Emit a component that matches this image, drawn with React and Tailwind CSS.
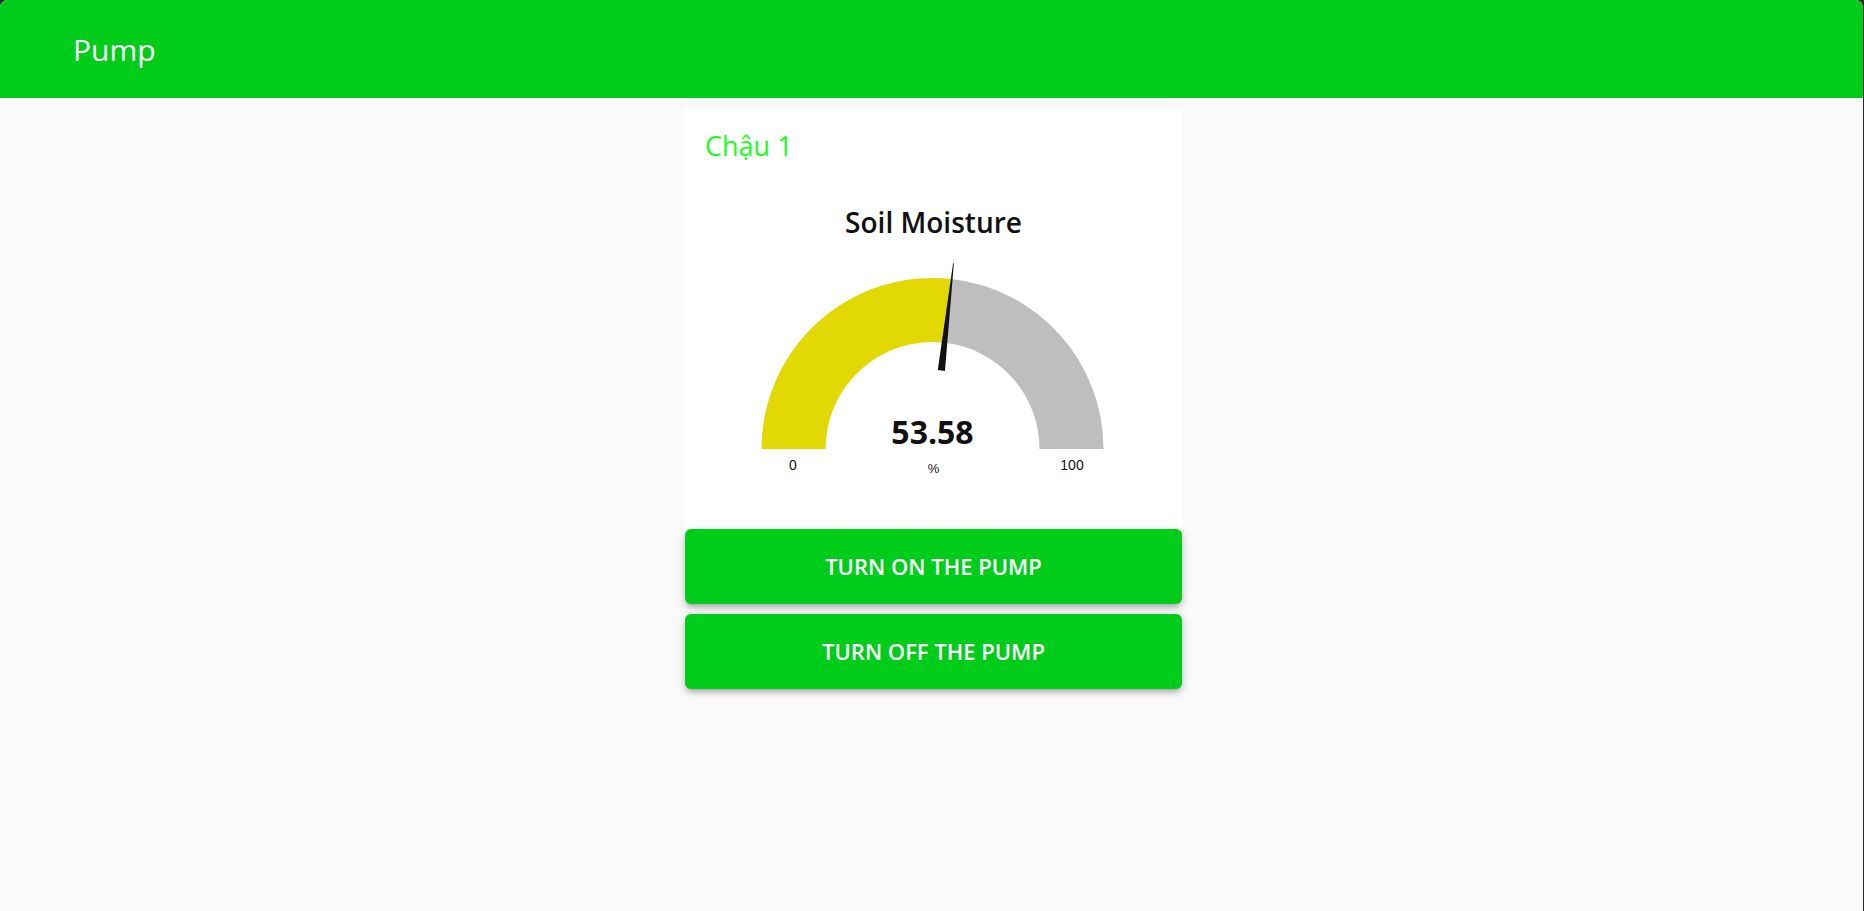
import React from "react";

const gauge = {
  title: "Soil Moisture",
  value: 53.58,
  min: 0,
  max: 100,
  label: "%",
};

// geometry of the gauge, in svg coordinates
const CX = 248.5;
const CY = 210;
const R_OUT = 171;
const R_IN = 107;

const polar = (r, angle) => [CX + r * Math.cos(angle), CY - r * Math.sin(angle)];

const Gauge = ({ value, min, max, label }) => {
  const frac = (value - min) / (max - min);
  const angle = Math.PI * (1 - frac);
  const [ox, oy] = polar(R_OUT, angle);
  const [ix, iy] = polar(R_IN, angle);

  const filled = `M ${CX - R_OUT} ${CY} A ${R_OUT} ${R_OUT} 0 0 1 ${ox} ${oy} L ${ix} ${iy} A ${R_IN} ${R_IN} 0 0 0 ${CX - R_IN} ${CY} Z`;
  const rest = `M ${ox} ${oy} A ${R_OUT} ${R_OUT} 0 0 1 ${CX + R_OUT} ${CY} L ${CX + R_IN} ${CY} A ${R_IN} ${R_IN} 0 0 0 ${ix} ${iy} Z`;

  // needle: thin wedge from r=79 to r=187
  const ux = Math.cos(angle);
  const uy = -Math.sin(angle);
  const nx = -uy;
  const ny = ux;
  const bx = CX + 79 * ux;
  const by = CY + 79 * uy;
  const tx = CX + 187 * ux;
  const ty = CY + 187 * uy;
  const needle = [
    [bx - 3.6 * nx, by - 3.6 * ny],
    [bx + 3.6 * nx, by + 3.6 * ny],
    [tx + 0.4 * nx, ty + 0.4 * ny],
    [tx - 0.4 * nx, ty - 0.4 * ny],
  ]
    .map((p) => p.join(","))
    .join(" ");

  return (
    <svg width="499" height="250" viewBox="0 0 499 250" className="block">
      <path d={filled} fill="#e2d904" />
      <path d={rest} fill="#bebebe" />
      <polygon points={needle} fill="#111111" />
      <text
        x={CX}
        y="205"
        textAnchor="middle"
        fill="#111111"
        style={{ fontFamily: "'Open Sans', sans-serif", fontWeight: 700, fontSize: 32 }}
      >
        {value.toFixed(2)}
      </text>
      <text
        x={CX + 1}
        y="234"
        textAnchor="middle"
        fill="#111111"
        style={{ fontFamily: "'Liberation Sans', Arial, sans-serif", fontSize: 13 }}
      >
        {label}
      </text>
      <text
        x={CX - 139.5}
        y="231"
        textAnchor="middle"
        fill="#111111"
        style={{ fontFamily: "'Liberation Sans', Arial, sans-serif", fontSize: 14 }}
      >
        {min}
      </text>
      <text
        x={CX + 139.5}
        y="231"
        textAnchor="middle"
        fill="#111111"
        style={{ fontFamily: "'Liberation Sans', Arial, sans-serif", fontSize: 14 }}
      >
        {max}
      </text>
    </svg>
  );
};

const PumpButton = ({ children }) => (
  <button className="mx-[1px] h-[75px] rounded-[6px] bg-[#00cc1a] text-[22px] font-semibold uppercase text-white shadow-[0_4px_5px_-3px_rgba(0,0,0,0.2),0_4px_6px_0_rgba(0,0,0,0.14),0_2px_12px_0_rgba(0,0,0,0.12)]">
    {children}
  </button>
);

const App = () => {
  return (
    <div className="h-screen bg-[#2b2b2b] font-['Open_Sans',sans-serif]">
      <div className="mr-[1px] flex h-full flex-col overflow-hidden rounded-t-[8px] bg-[#fafafa]">
        <header className="flex h-[98px] shrink-0 items-center bg-[#00cc1a] pl-[73px]">
          <span className="text-[30px] text-white">Pump</span>
        </header>

        <div className="mt-[9px] flex justify-center pl-[4px]">
          <div className="flex w-[499px] flex-col">
            <div className="flex flex-col bg-white pt-[19px] pb-[39px]">
              <span className="pl-[21px] text-[27px] leading-[39px] text-[#1aff1a]">Chậu 1</span>
              <span className="mt-[40px] text-center text-[28px] leading-[34px] font-semibold text-[#111111]">
                {gauge.title}
              </span>
              <Gauge value={gauge.value} min={gauge.min} max={gauge.max} label={gauge.label} />
            </div>
            <div className="mt-[1px] flex flex-col gap-[10px]">
              <PumpButton>Turn on the pump</PumpButton>
              <PumpButton>Turn off the pump</PumpButton>
            </div>
          </div>
        </div>
      </div>
    </div>
  );
};

export default App;
